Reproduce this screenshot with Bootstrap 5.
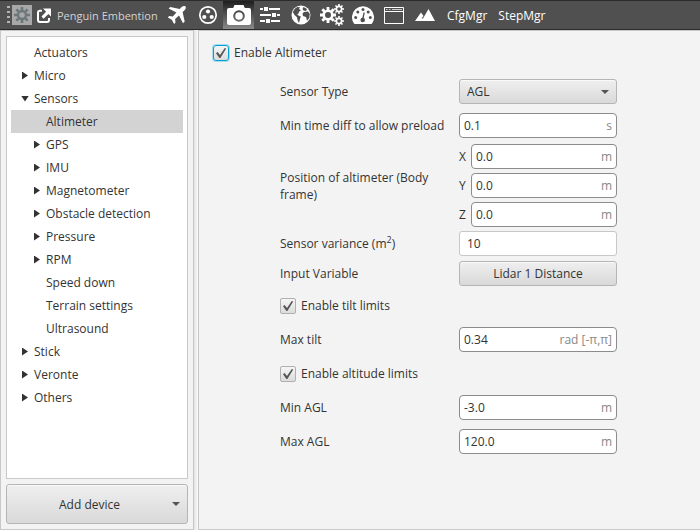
<!DOCTYPE html>
<html lang="en">
<head>
<meta charset="utf-8">
<meta name="viewport" content="width=device-width, initial-scale=1">
<title>Penguin Embention</title>
<link href="https://cdn.jsdelivr.net/npm/bootstrap@5.3.0/dist/css/bootstrap.min.css" rel="stylesheet">
<style>
  body { font-family: "Open Sans", "Noto Sans", sans-serif; font-size: 12px; line-height: 17px; color: #333; background: #f3f3f3; }
  button, input, select { font-size: 12px; line-height: 17px; color: #333; }
  svg { display: block; flex: none; }

  .topbar { height: 30px; background: #505050; border-top: 1px solid #2b2b2b; border-bottom: 1px solid #2b2b2b; color: #fff; padding-left: 5px; }
  .topbar button { border: 0; background: none; color: #fff; padding: 0; height: 28px; display: flex; align-items: center; justify-content: center; white-space: nowrap; }
  .topbar .project { color: #d2d2d2; font-size: 11px; width: 103px; justify-content: flex-start; margin: 0 1px 0 6px; }
  .topbar .tool { width: 31px; }
  .topbar .tool.current { background: linear-gradient(#1e1e1e, #8a8a8a); }
  .topbar .device { background: #a8a8a8; height: 20px; width: 20px; margin: 0 5px 0 2px; color: #6b7779; }
  .topbar .text-tool { margin-left: 7px; margin-right: 4px; }

  .side { width: 194px; border: 1px solid #c8c8c8; padding: 5px; gap: 5px; }
  .splitter { width: 4px; background: linear-gradient(90deg, #e4e4e4, #fafafa); }
  .content-pane { border: 1px solid #c8c8c8; border-right: 0; padding: 13px 14px; }
  .tree { background: #fff; border: 1px solid #c8c8c8; padding: 4px; }
  .tree a { display: flex; align-items: center; height: 23px; padding-left: 11px; gap: 6px; color: #333; text-decoration: none; }
  .tree ul ul a { padding-left: 23px; }
  .tree a::before { content: ""; width: 6px; height: 8px; flex: none; }
  .tree a.branch::before { background: #333; clip-path: polygon(0 0, 100% 50%, 0 100%); }
  .tree a.branch.open::before { width: 8px; height: 6px; margin: 0 -1px; clip-path: polygon(0 0, 100% 0, 50% 100%); }
  .tree a.selected { background: #d3d3d3; }

  .face { background: linear-gradient(#efefef, #d9d9d9); border: 1px solid #b5b5b5; border-radius: 3px; box-shadow: inset 0 1px 0 #f9f9f9; }
  .add-device { height: 40px; padding: 0 7px 0 0; }

  .fields { display: grid; grid-template-columns: minmax(0, 179px) minmax(0, 158px); align-items: center; margin: 18px 0 0 67px; row-gap: 9px; }
  .fields > * { min-height: 25px; }
  .fields > label, .fields > span { display: flex; align-items: center; }
  .tight { margin-top: -3px; }
  .tight-group { margin-top: -5px; }
  .tight-button { margin-top: -4px; }
  .tight-tick { margin-top: -2px; }
  .fields sup { font-size: 9px; line-height: 8px; top: -5px; }
  .triple { display: grid; gap: 4px; }
  .triple label { width: 12px; }
  .value { display: flex; height: 25px; flex: 1; background: #fff; border: 1px solid #8c8c8c; border-radius: 4px; padding: 0 4px; align-items: center; }
  .value input { border: 0; padding: 0; outline: 0; background: none; width: 100%; min-width: 0; flex: 1; }
  .value span { color: #888; white-space: nowrap; }
  .value.plain { border-color: #c8c8c8; border-radius: 3px; padding-left: 7px; }
  select.face { appearance: none; height: 25px; width: 100%; padding: 0 7px; background: url("data:image/svg+xml,%3Csvg xmlns='http://www.w3.org/2000/svg' width='8' height='4'%3E%3Cpath d='M0 0h8L4 4z' fill='%23555'/%3E%3C/svg%3E") no-repeat right 7px center, linear-gradient(#efefef, #d9d9d9); }
  .tick { appearance: none; width: 16px; height: 16px; flex: none; margin: 0; border: 1px solid #b0b0b0; border-radius: 2px; background: linear-gradient(#f5f5f5, #dcdcdc); }
  .tick:checked { background: url("data:image/svg+xml,%3Csvg xmlns='http://www.w3.org/2000/svg' width='14' height='14'%3E%3Cpath d='M2 7.2 3.6 6 6 9 10.8 2 12.2 2.6 6.4 12H5.4z' fill='%23555'/%3E%3C/svg%3E") center, linear-gradient(#f5f5f5, #dcdcdc); }
  .tick.active { border-color: #039ed3; border-radius: 3px; box-shadow: 0 0 0 1px #a6dcee; }
  .tick-row { grid-column: 1 / -1; gap: 5px; }
</style>
</head>
<body>
<div class="d-flex flex-column min-vh-100">
  <header class="topbar d-flex align-items-center">
    <svg width="5" height="22" viewBox="0 0 5 22" fill="#b4b4b4"><path d="M2 2h3v2H2zM2 7h3v2H2zM2 12h3v2H2zM2 17h3v2H2z"/></svg>
    <button class="device" aria-label="Device settings"><svg width="16" height="16" viewBox="-8 -8 16 16" fill="none" stroke="currentColor"><circle r="4" stroke-width="2.4"/><path stroke-width="2.6" d="M0-8v3M0 5v3M-8 0h3M5 0h3M-5.6-5.6l2 2M3.6 3.6l2 2M-5.6 5.6l2-2M3.6-3.6l2-2"/></svg></button>
    <button aria-label="Open in window"><svg width="14" height="15" viewBox="0 0 14 15"><path d="M5 2.8H3a2 2 0 0 0-2 2V12a2 2 0 0 0 2 2h7a2 2 0 0 0 2-2v-2" fill="none" stroke="#fff" stroke-width="2"/><path d="M6 .5h8v8l-2.6-2.6-4.8 4.8L4.5 8.6l4.6-4.9z" fill="#fff"/></svg></button>
    <button class="project">Penguin Embention</button>
    <button class="tool" aria-label="Platform"><svg width="20" height="20" viewBox="0 0 20 20" fill="#fff"><path d="M17.5 1C16.1.7 14.5 2 12.7 4L3.3 1.9 1.7 3.5 9.4 7.6 5.8 11.5 2.2 11 .8 12.4 4.8 14.7 7.1 18.9 8.5 17.5 8.100 14 12 10.4 16 18.2 17.7 16.6 15.6 7.100C17.8 5.2 19.2 3.6 18.8 2Q18.5 1.2 17.5 1z"/></svg></button>
    <button class="tool" aria-label="Connector"><svg width="20" height="20" viewBox="0 0 20 20"><circle cx="10" cy="10" r="8.2" fill="none" stroke="#fff" stroke-width="1.7"/><g fill="#fff"><circle cx="10" cy="6.5" r="2.1"/><circle cx="6.3" cy="12" r="2.1"/><circle cx="13.7" cy="12" r="2.1"/></g></svg></button>
    <button class="tool current" aria-label="Sensors"><svg width="24" height="22" viewBox="0 0 24 22"><path fill="#fff" fill-rule="evenodd" d="M7.500 1h9l1.300 3H22a2 2 0 0 1 2 2v13a2 2 0 0 1-2 2H2a2 2 0 0 1-2-2V6a2 2 0 0 1 2-2h4.200zM12 6.200a5.800 5.800 0 1 0 0 11.600 5.800 5.800 0 0 0 0-11.600zm0 2a3.800 3.800 0 1 1 0 7.600 3.800 3.800 0 0 1 0-7.600z"/></svg></button>
    <button class="tool" aria-label="Control"><svg width="20" height="18" viewBox="0 0 20 18" fill="#fff"><path d="M0 2h20v2H0zM0 8h20v2H0zM0 14h20v2H0z"/><path stroke="#505050" d="M3.500.500h5v5h-5zM11.500 6.500h5v5h-5zM5.500 12.500h5v5h-5z"/></svg></button>
    <button class="tool" aria-label="Navigation"><svg width="20" height="20" viewBox="0 0 20 20"><circle cx="10" cy="10" r="9.5" fill="#fff"/><path fill="#505050" d="M4 3.500 6.500 2l2.500.300L8 4l2 1.300-2 1.500-.5 2L6 9l1.500 1.500 2.300 1-.8 2.500-1 4-1.500-3-.5-2.800L3.500 10 1.800 7zM12.500 2l3.500 2-1 2-2.500-.5-1-1.500zM13 7l4-.5 1.800 2.500-.5 4-2.300 2.800L15 12l-3-1-.5-2.500z"/></svg></button>
    <button class="tool" aria-label="Automations"><svg width="24" height="22" viewBox="0 0 24 22" fill="none" stroke="#fff"><circle cx="8" cy="11" r="4.3" stroke-width="2.6"/><path stroke-width="2.8" d="M8 3v3M8 16v3M0 11h3M13 11h3M2.300 5.300l2 2M11.700 14.700l2 2M2.300 16.700l2-2M11.700 7.300l2-2"/><g stroke-width="1.6"><circle cx="19" cy="5" r="2.6"/><path d="M19 0v2M19 8v2M14 5h2M22 5h2M15.500 1.500l1.200 1.200M21.300 7.300l1.200 1.200M15.500 8.500l1.200-1.200M21.300 2.700l1.200-1.200"/><circle cx="19" cy="17" r="2.6"/><path d="M19 12v2M19 20v2M14 17h2M22 17h2M15.500 13.500l1.200 1.200M21.300 19.300l1.200 1.200M15.500 20.500l1.200-1.200M21.300 14.700l1.200-1.200"/></g></svg></button>
    <button class="tool" aria-label="Telemetry"><svg width="22" height="18" viewBox="0 0 22 18"><path fill="#fff" d="M2 17.500A11 11 0 1 1 20 17.500Q19.500 18 19 18H3Q2.500 18 2 17.500z"/><g fill="#505050"><circle cx="3.7" cy="11.5" r="1.5"/><circle cx="5.8" cy="6" r="1.5"/><circle cx="11" cy="3.5" r="1.5"/><circle cx="16.2" cy="6" r="1.5"/><circle cx="18.3" cy="11.5" r="1.5"/><circle cx="10.7" cy="14" r="2.3"/><path d="M11.500 6.500h1.300l-1.300 7-1.500-.3z"/></g></svg></button>
    <button class="tool" aria-label="Panel"><svg width="20" height="17" viewBox="0 0 20 17" fill="none" stroke="#fff"><path d="M.500.500h19v16H.500zM.500 4.500h19"/><path d="M2 2.500h1.500M5 2.500h1.500M8 2.500h10" stroke="#ccc"/></svg></button>
    <button class="tool" aria-label="Terrain"><svg width="20" height="12" viewBox="0 0 20 12"><path fill="#fff" d="M0 12 6 3.500 8.500 7 6.500 9.500 8 9.500 13.500 0 20 12z"/></svg></button>
    <button class="text-tool">CfgMgr</button>
    <button class="text-tool">StepMgr</button>
  </header>

  <div class="d-flex flex-grow-1">
    <aside class="side d-flex flex-column flex-shrink-0">
      <nav class="tree flex-grow-1" aria-label="Devices">
        <ul class="list-unstyled m-0">
          <li><a href="#">Actuators</a></li>
          <li><a href="#" class="branch">Micro</a></li>
          <li><a href="#" class="branch open">Sensors</a>
            <ul class="list-unstyled">
              <li><a href="#" class="selected">Altimeter</a></li>
              <li><a href="#" class="branch">GPS</a></li>
              <li><a href="#" class="branch">IMU</a></li>
              <li><a href="#" class="branch">Magnetometer</a></li>
              <li><a href="#" class="branch">Obstacle detection</a></li>
              <li><a href="#" class="branch">Pressure</a></li>
              <li><a href="#" class="branch">RPM</a></li>
              <li><a href="#">Speed down</a></li>
              <li><a href="#">Terrain settings</a></li>
              <li><a href="#">Ultrasound</a></li>
            </ul>
          </li>
          <li><a href="#" class="branch">Stick</a></li>
          <li><a href="#" class="branch">Veronte</a></li>
          <li><a href="#" class="branch">Others</a></li>
        </ul>
      </nav>
      <button class="face add-device d-flex align-items-center w-100"><span class="flex-grow-1 text-center">Add device</span><svg width="8" height="4" viewBox="0 0 8 4"><path fill="#555" d="M0 0h8L4 4z"/></svg></button>
    </aside>
    <div class="splitter flex-shrink-0"></div>

    <main class="content-pane flex-grow-1">
      <div class="tick-row d-flex align-items-center"><input class="tick active" type="checkbox" id="enable" checked><label for="enable">Enable Altimeter</label></div>
      <form class="fields">
        <label for="type">Sensor Type</label>
        <select class="face" id="type"><option>AGL</option></select>

        <label for="time">Min time diff to allow preload</label>
        <div class="value"><input id="time" value="0.1"><span>s</span></div>

        <span class="tight">Position of altimeter (Body frame)</span>
        <div class="triple tight">
          <div class="d-flex align-items-center"><label for="px">X</label><div class="value"><input id="px" value="0.0"><span>m</span></div></div>
          <div class="d-flex align-items-center"><label for="py">Y</label><div class="value"><input id="py" value="0.0"><span>m</span></div></div>
          <div class="d-flex align-items-center"><label for="pz">Z</label><div class="value"><input id="pz" value="0.0"><span>m</span></div></div>
        </div>

        <label class="tight-group" for="variance"><span>Sensor variance (m<sup>2</sup>)</span></label>
        <div class="value plain tight-group"><input id="variance" value="10"></div>

        <label class="tight-button" for="variable">Input Variable</label>
        <button class="face tight-button" type="button" id="variable">Lidar 1 Distance</button>

        <div class="tick-row tight-tick d-flex align-items-center"><input class="tick" type="checkbox" id="tilt" checked><label for="tilt">Enable tilt limits</label></div>

        <label for="maxtilt">Max tilt</label>
        <div class="value"><input id="maxtilt" value="0.34"><span>rad [-π,π]</span></div>

        <div class="tick-row d-flex align-items-center"><input class="tick" type="checkbox" id="alt" checked><label for="alt">Enable altitude limits</label></div>

        <label for="minagl">Min AGL</label>
        <div class="value"><input id="minagl" value="-3.0"><span>m</span></div>

        <label for="maxagl">Max AGL</label>
        <div class="value"><input id="maxagl" value="120.0"><span>m</span></div>
      </form>
    </main>
  </div>
</div>
<script src="https://cdn.jsdelivr.net/npm/bootstrap@5.3.0/dist/js/bootstrap.bundle.min.js"></script>
</body>
</html>
